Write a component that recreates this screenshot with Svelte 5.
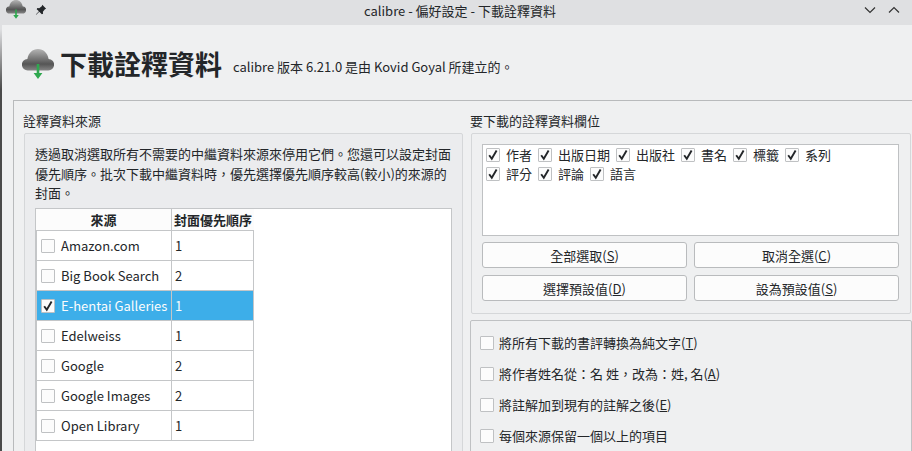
<script>
    const sources = [
        { name: "Amazon.com", prio: 1, on: false },
        { name: "Big Book Search", prio: 2, on: false },
        { name: "E-hentai Galleries", prio: 1, on: true },
        { name: "Edelweiss", prio: 1, on: false },
        { name: "Google", prio: 2, on: false },
        { name: "Google Images", prio: 2, on: false },
        { name: "Open Library", prio: 1, on: false }
    ];
    const fieldRows = [
        ["作者", "出版日期", "出版社", "書名", "標籤", "系列"],
        ["評分", "評論", "語言"]
    ];
    const buttons = [
        ["全部選取(", "S"],
        ["取消全選(", "C"],
        ["選擇預設值(", "D"],
        ["設為預設值(", "S"]
    ];
    const options = [
        ["將所有下載的書評轉換為純文字(", "T", ")"],
        ["將作者姓名從：名 姓，改為：姓, 名(", "A", ")"],
        ["將註解加到現有的註解之後(", "E", ")"],
        ["每個來源保留一個以上的項目", "", ""]
    ];
</script>

{#snippet cloud(w)}
    <svg class="cloud" width={w} height={w} viewBox="0 0 32 32">
        <defs>
            <linearGradient id="cl" x1="0" y1="0" x2="0" y2="1">
                <stop offset="0" stop-color="#b4b4b4" />
                <stop offset="0.7" stop-color="#555" />
                <stop offset="1" stop-color="#858585" />
            </linearGradient>
        </defs>
        <path d="M6 21.5a5.8 5.8 0 0 1-.6-11.6C6.500 4 10.500 0 16 0s9.500 4 10.600 9.900A5.800 5.800 0 0 1 26 21.500z" fill="url(#cl)" />
        <path d="M14.700 15h2.600v9h3.100l-4.400 6-4.400-6h3.100z" fill="#2fa84f" />
    </svg>
{/snippet}

{#snippet check(on)}
    <span class="box" class:on>
        {#if on}
            <svg width="14" height="14" viewBox="0 0 14 14"><path d="M3.2 7.2l2.6 3.6L10.6 2.6" fill="none" stroke="#232629" stroke-width="1.9" /></svg>
        {/if}
    </span>
{/snippet}

<div class="page">
    <div class="titlebar">
        <span class="tb-left">
            {@render cloud(20)}
            <svg class="pin" width="12" height="12" viewBox="0 0 14 14"><path d="M8.5 1l4.5 4.5-1.4.6-2.4 3 .2 2.2L8 12 5 9l-3.6 3.6L1 12.2 4.6 8.6 2 6l.7-1.3 2.2.2 3-2.4z" fill="#232629" /></svg>
        </span>
        <span class="tb-title">calibre - 偏好設定 - 下載詮釋資料</span>
        <span class="tb-right">
            <svg width="14" height="10" viewBox="0 0 14 10"><path d="M2 2.5l5 5 5-5" fill="none" stroke="#333" stroke-width="1.2" /></svg>
            <svg width="14" height="10" viewBox="0 0 14 10"><path d="M2 7.5l5-5 5 5" fill="none" stroke="#333" stroke-width="1.2" /></svg>
        </span>
    </div>

    <div class="heading">
        {@render cloud(32)}
        <h1>下載詮釋資料</h1>
        <span class="by">calibre 版本 6.21.0 是由 Kovid Goyal 所建立的。</span>
    </div>

    <div class="group">
        <section class="left">
            <div class="label">詮釋資料來源</div>
            <div class="frame lframe">
                <p>透過取消選取所有不需要的中繼資料來源來停用它們。您還可以設定封面優先順序。批次下載中繼資料時，優先選擇優先順序較高(較小)的來源的封面。</p>
                <div class="table">
                    <div class="thead">
                        <div class="th c1">來源</div>
                        <div class="th c2">封面優先順序</div>
                    </div>
                    <div class="rows">
                        {#each sources as s}
                            <div class="row" class:sel={s.on}>
                                <div class="c1 cell">{@render check(s.on)}<span class="nm">{s.name}</span></div>
                                <div class="c2 cell">{s.prio}</div>
                            </div>
                        {/each}
                    </div>
                </div>
            </div>
        </section>

        <section class="right">
            <div class="label">要下載的詮釋資料欄位</div>
            <div class="frame rframe">
                <div class="fields">
                    {#each fieldRows as r}
                        <div class="fline">
                            {#each r as f}
                                <span class="field">{@render check(true)}<span>{f}</span></span>
                            {/each}
                        </div>
                    {/each}
                </div>
                <div class="btns">
                    {#each buttons as b}
                        <button>{b[0]}<u>{b[1]}</u>)</button>
                    {/each}
                </div>
            </div>
            <div class="frame opts">
                {#each options as o}
                    <div class="opt">{@render check(false)}<span>{o[0]}<u>{o[1]}</u>{o[2]}</span></div>
                {/each}
            </div>
        </section>
    </div>
</div>

<style>
    :global(body) {
        margin: 0;
        background: #eff0f1;
    }

    .page {
        width: 912px;
        height: 451px;
        overflow: hidden;
        box-sizing: border-box;
        border-left: 2px solid;
        border-image: linear-gradient(#dfe0e2 30px, #4a4a4a 90px) 1;
        background: #eff0f1;
        color: #232629;
        font-family: "Noto Sans CJK TC", "Noto Sans", sans-serif;
        font-size: 13px;
    }

    .titlebar {
        height: 20px;
        padding: 0 0 5px 8px;
        margin-left: -2px;
        background: #dfe0e2;
        display: grid;
        grid-template-columns: 1fr auto 1fr;
        align-items: center;
    }

    .tb-left {
        display: flex;
        align-items: center;
        gap: 9px;
        margin-left: -2px;
    }

    .tb-right {
        display: flex;
        justify-content: flex-end;
        gap: 10px;
        padding-right: 11px;
    }

    .heading {
        height: 73px;
        padding: 2px 0 0 20px;
        display: flex;
        align-items: center;
    }

    .heading .cloud {
        margin-top: 3px;
    }

    h1 {
        margin: 0 11px 0 6px;
        font-size: 27px;
        font-weight: 700;
        line-height: 36px;
    }

    .by {
        position: relative;
        top: 3px;
    }

    .group {
        margin-left: 11px;
        border-top: 1px solid #b8babc;
        border-left: 1px solid #b8babc;
        padding: 10px 0 0 9px;
        display: grid;
        grid-template-columns: 441px 442px;
        column-gap: 6px;
    }

    .label {
        height: 19px;
        line-height: 19px;
        margin-bottom: 3px;
    }

    .frame {
        border: 1px solid #d5d7d9;
        border-radius: 2px;
        box-sizing: border-box;
    }

    .lframe {
        margin-left: 1px;
        width: 439px;
        padding: 10px 10px 0 10px;
        height: 400px;
        background: #ebecee;
    }

    p {
        margin: 0 0 7px;
        line-height: 19.5px;
        height: 57px;
    }

    .table {
        border: 1px solid #c4c6c8;
        background: #fff;
        height: 300px;
    }

    .thead {
        display: flex;
        height: 21px;
    }

    .th {
        box-sizing: border-box;
        font-weight: 700;
        text-align: center;
        line-height: 21px;
        background: #fcfcfc;
    }

    .th.c1 {
        width: 136px;
        border-right: 1px solid #c4c6c8;
    }

    .th.c2 {
        width: 82px;
    }

    .rows {
        width: 217px;
        border-left: 1px solid #c4c6c8;
        border-top: 1px solid #c4c6c8;
    }

    .row {
        display: flex;
        height: 29px;
        line-height: 29px;
        border-bottom: 1px solid #c4c6c8;
        border-right: 1px solid #c4c6c8;
    }

    .row.sel {
        background: #3daee9;
        color: #fcfcfc;
    }

    .cell {
        box-sizing: border-box;
    }

    .row .c1 {
        width: 135px;
        display: flex;
        align-items: center;
        border-right: 1px solid #c4c6c8;
        padding-left: 4px;
    }

    .row .c2 {
        padding-left: 3px;
    }

    .nm {
        margin-left: 6px;
        white-space: nowrap;
    }

    .box {
        box-sizing: border-box;
        flex: none;
        width: 14px;
        height: 14px;
        border: 1px solid #bfc1c3;
        border-radius: 1px;
        background: #fcfcfc;
        display: inline-block;
        position: relative;
    }

    .box svg {
        position: absolute;
        left: -1px;
        top: -1px;
    }

    .rframe {
        margin-left: 1px;
        width: 440px;
        padding: 10px 11px 11px 10px;
        height: 181px;
    }

    .fields {
        box-sizing: border-box;
        height: 92px;
        background: #fff;
        border: 1px solid #bfc1c3;
        padding: 0 0 0 3px;
    }

    .fline {
        display: flex;
        gap: 6px;
        height: 19px;
        align-items: center;
    }

    .field {
        display: flex;
        align-items: center;
        gap: 6px;
    }

    .btns {
        display: grid;
        grid-template-columns: 205px 205px;
        column-gap: 7px;
        row-gap: 7px;
        margin-top: 6px;
    }

    button {
        height: 26px;
        padding: 0;
        border: 1px solid #b9bbbd;
        border-radius: 3px;
        background: #fcfcfc;
        color: #232629;
        font: inherit;
    }

    .opts {
        margin-top: 6px;
        border-color: #bfc1c3;
        height: 140px;
        padding-top: 6px;
    }

    .opt {
        height: 31px;
        display: flex;
        align-items: center;
        gap: 5px;
        padding-left: 9px;
    }
</style>
